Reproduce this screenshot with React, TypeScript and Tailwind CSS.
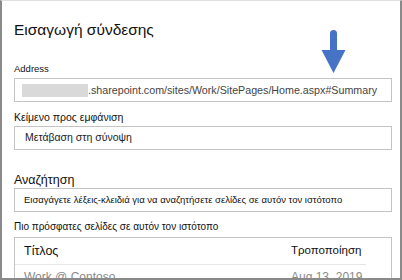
import React from 'react';

const Field: React.FC<{ children: React.ReactNode; className?: string }> = ({ children, className }) => (
  <div className={`h-[24px] border border-[#c4c4c4] flex items-center ${className ?? ''}`}>{children}</div>
);

export default function App() {
  return (
    <div className="relative w-[402px] h-[280px] overflow-hidden bg-white border-x-2 border-b-2 border-t border-[#8a8a8a] border-t-[#e0e0e0] font-['Liberation_Sans',sans-serif] text-[#222]">
      {/* Annotation arrow */}
      <svg className="absolute left-[319px] top-[29px]" width="26" height="44" viewBox="0 0 26 44">
        <path d="M9 3.5a3.5 3.5 0 0 1 7 0V20h8.5L12.5 43 0.5 20H9Z" fill="#4673c6" />
      </svg>

      <div className="pl-[12px] pr-[8px] pt-[15px]">
        <h1 className="text-[15.5px] leading-[28px] text-[#111] font-normal">Εισαγωγή σύνδεσης</h1>

        <div className="mt-[18px] text-[9.5px] leading-[14px] text-[#111]">Address</div>
        <Field className="mt-[2px] px-[7px] text-[10.7px] text-[#444]">
          <span className="w-[66px] h-[13px] bg-[#d9d9d9] shrink-0" />
          <span className="whitespace-nowrap">.sharepoint.com/sites/Work/SitePages/Home.aspx#Summary</span>
        </Field>

        <div className="mt-[8px] text-[10.5px] leading-[14px] text-[#111]">Κείμενο προς εμφάνιση</div>
        <Field className="mt-[2px] px-[10px] text-[10.5px] text-[#222]">Μετάβαση στη σύνοψη</Field>

        <div className="mt-[22px] text-[12.5px] leading-[16px] text-[#111]">Αναζήτηση</div>
        <Field className="px-[9px] text-[9.5px] text-[#111]">
          <span className="whitespace-nowrap">Εισαγάγετε λέξεις-κλειδιά για να αναζητήσετε σελίδες σε αυτόν τον ιστότοπο</span>
        </Field>

        <div className="mt-[8px] text-[10px] leading-[14px] text-[#111]">Πιο πρόσφατες σελίδες σε αυτόν τον ιστότοπο</div>
        <div className="mt-[3px] h-[60px] border border-[#c4c4c4]">
          <div className="mr-[25px] h-[27px] flex items-center border-b border-[#e6e6e6] text-[12.5px] text-[#111]">
            <span className="pl-[9px] w-[276px]">Τίτλος</span>
            <span className="text-[11.5px]">Τροποποίηση</span>
          </div>
          <div className="mr-[25px] h-[24px] flex items-center text-[12px] text-[#8a8a8a]">
            <span className="pl-[9px] w-[276px]">Work @ Contoso</span>
            <span>Aug 13, 2019</span>
          </div>
        </div>
      </div>
    </div>
  );
}
